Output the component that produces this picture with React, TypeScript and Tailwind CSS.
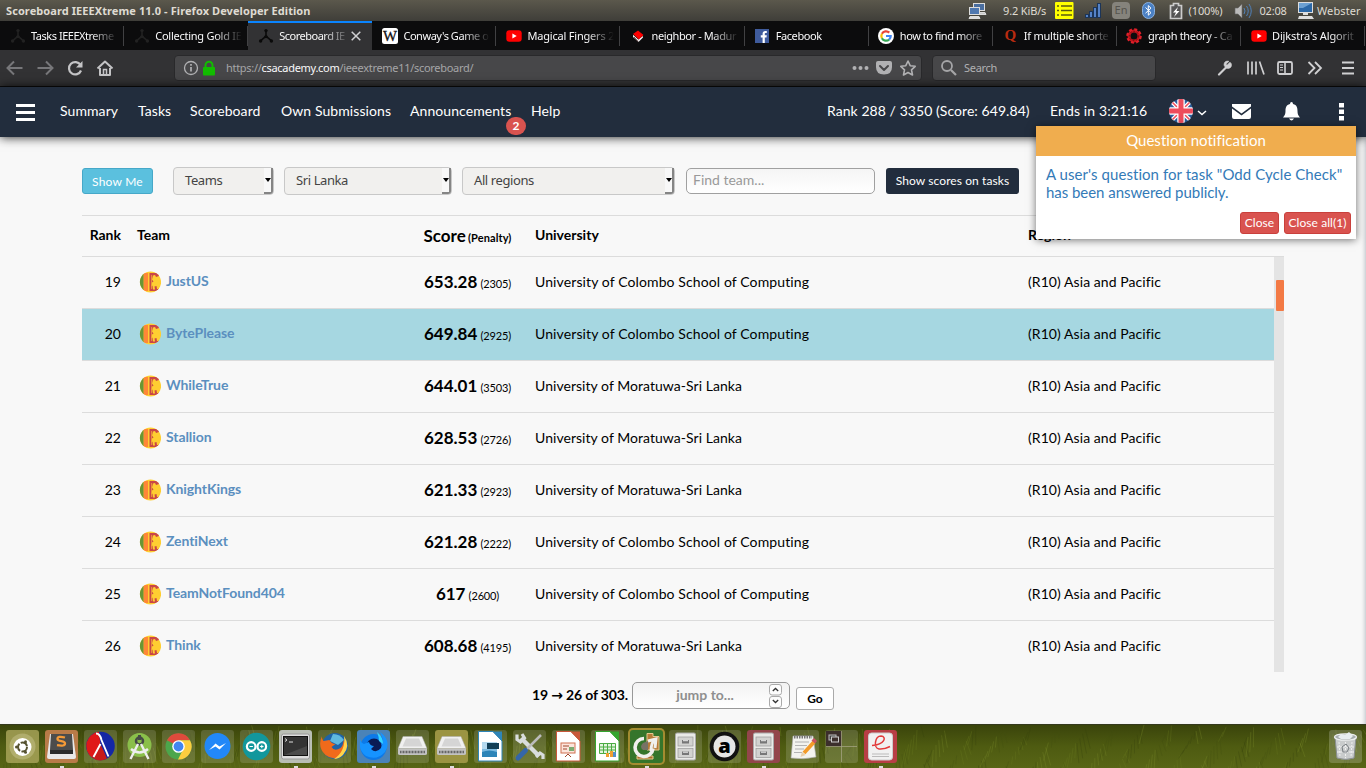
import React from "react";

const ui = "font-['Noto_Sans',sans-serif]";

function CsIcon({ dim }: { dim?: boolean }) {
  return (
    <svg width="16" height="16" viewBox="0 0 16 16" className="shrink-0" stroke={dim ? "#222" : "#0a0a0a"} fill={dim ? "#222" : "#0a0a0a"}>
      <path d="M8 3.2V8.2L2.5 12.8M8 8.2l5.5 4.6" strokeWidth="1.6" fill="none" />
      <circle cx="8" cy="2.6" r="1.7" stroke="none" />
      <circle cx="2.6" cy="13" r="1.7" stroke="none" />
      <circle cx="13.4" cy="13" r="1.7" stroke="none" />
      <circle cx="8" cy="8.6" r="1.7" stroke="none" />
    </svg>
  );
}

function YoutubeIcon() {
  return (
    <svg width="16" height="16" viewBox="0 0 16 16" className="shrink-0">
      <rect x="0.3" y="2.3" width="15.4" height="11.4" rx="3" fill="#f00" />
      <path d="M6.4 5.5v5l4.3-2.5z" fill="#fff" />
    </svg>
  );
}

const tabs: { title: string; icon: React.ReactNode; active?: boolean; ls: string }[] = [
  { title: "Tasks IEEEXtreme", icon: <CsIcon dim />, ls: "tracking-[-0.48px]" },
  { title: "Collecting Gold IE", icon: <CsIcon dim />, ls: "tracking-[-0.25px]" },
  { title: "Scoreboard IE", icon: <CsIcon />, active: true, ls: "tracking-[-0.5px]" },
  {
    title: "Conway's Game o",
    icon: (
      <svg width="16" height="16" viewBox="0 0 16 16" className="shrink-0">
        <rect width="16" height="16" rx="2.5" fill="#fff" />
        <text x="8" y="12.800" textAnchor="middle" fontFamily="Liberation Serif" fontSize="14" fill="#111" stroke="#111" strokeWidth=".3" textLength="14" lengthAdjust="spacingAndGlyphs">W</text>
      </svg>
    ),
    ls: "tracking-[-0.45px]",
  },
  { title: "Magical Fingers 2", icon: <YoutubeIcon />, ls: "tracking-[-0.2px]" },
  {
    title: "neighbor - Madur",
    icon: (
      <svg width="16" height="16" viewBox="0 0 16 16" className="shrink-0">
        <path d="M3 6.5V9l5.5 5L13 9.5V8L8.7 11z" fill="#eee" />
        <path d="M3 6l5-3.5L13.5 7 8.7 11.4z" fill="#f00" />
        <path d="M3 6.3l5.5 5M4 9l4 4.5" stroke="#300" strokeWidth=".7" />
      </svg>
    ),
    ls: "tracking-[-0.4px]",
  },
  {
    title: "Facebook",
    icon: (
      <svg width="16" height="16" viewBox="0 0 16 16" className="shrink-0">
        <rect x="1" y="1" width="14" height="14" fill="#3f5b9c" />
        <path d="M8.6 15V9.5H6.8V7.3h1.8V5.8c0-2 1.1-2.9 2.7-2.9h1.5v2.2h-1c-.8 0-1 .4-1 1v1.2h2l-.3 2.2h-1.7V15z" fill="#fff" />
      </svg>
    ),
    ls: "tracking-[-0.4px]",
  },
  {
    title: "how to find more",
    icon: (
      <svg width="16" height="16" viewBox="0 0 16 16" className="shrink-0">
        <circle cx="8" cy="8" r="8" fill="#fff" />
        <g fill="none" strokeWidth="2.2">
          <path d="M11.3 4.6A4.7 4.7 0 0 0 3.9 5.8" stroke="#ea4335" />
          <path d="M3.9 5.8a4.8 4.8 0 0 0 0 4.4" stroke="#fbbc05" />
          <path d="M3.9 10.2a4.7 4.7 0 0 0 7.2 1.4" stroke="#34a853" />
          <path d="M11.1 11.6A4.6 4.6 0 0 0 12.7 8H8" stroke="#4285f4" />
        </g>
      </svg>
    ),
    ls: "tracking-[-0.42px]",
  },
  {
    title: "If multiple shorte",
    icon: (
      <span className="w-4 h-4 shrink-0 text-center leading-[15px] font-bold text-[15px] text-[#b92b10] font-['Liberation_Serif',serif]">Q</span>
    ),
    ls: "tracking-[-0.25px]",
  },
  {
    title: "graph theory - Ca",
    icon: (
      <svg width="16" height="16" viewBox="0 0 16 16" className="shrink-0">
        <circle cx="8" cy="8" r="5" fill="none" stroke="#c8141c" strokeWidth="3" />
        <circle cx="8" cy="8" r="6.7" fill="none" stroke="#e0202a" strokeWidth="2.2" strokeDasharray="3 2.26" />
        <circle cx="8" cy="8" r="4.7" fill="none" stroke="#5c0a0a" strokeWidth=".9" strokeDasharray="1.5 2" />
      </svg>
    ),
    ls: "tracking-[-0.32px]",
  },
  { title: "Dijkstra's Algorit", icon: <YoutubeIcon />, ls: "tracking-[-0.15px]" },
];

function TitleBar() {
  return (
    <div className={`h-[21px] flex items-center bg-gradient-to-b from-[#5b584c] to-[#3f3e39] text-[#dfdbd2] text-[11px] whitespace-nowrap ${ui}`}>
      <div className="w-[967px] pl-1.5 pt-px font-bold text-[11px] tracking-[0.08px]">Scoreboard IEEEXtreme 11.0 - Firefox Developer Edition</div>
      <svg width="22" height="19" viewBox="0 0 22 19" className="shrink-0">
        <g stroke="#ddd" strokeWidth="1">
          <rect x="6.5" y="2.5" width="11" height="7" fill="#4a6ea0" />
          <path d="M9 11.5h9l1 2h-10z" fill="#ccc" />
          <rect x="2.5" y="6.5" width="10" height="7" fill="#4f78b0" />
          <path d="M3 15.5h9l1 2H2z" fill="#ddd" />
        </g>
      </svg>
      <div className="w-[66px] pl-3.5 pt-px text-[11px] tracking-[-0.15px]">9.2 KiB/s</div>
      <svg width="19" height="17" viewBox="0 0 19 17" className="shrink-0">
        <rect width="18.5" height="17" rx="1" fill="#ff0" />
        <path d="M2 4h2M2 8.500h2M2 13h2M6 4h11M6 8.500h11M6 13h11" stroke="#5a5a10" strokeWidth="1.4" />
      </svg>
      <svg width="16" height="15" viewBox="0 0 16 15" className="shrink-0 ml-[11px]">
        <g fill="#5583c8" stroke="#1c3558">
          <rect x=".5" y="11.500" width="3" height="3" />
          <rect x="4.500" y="8.500" width="3" height="6" />
          <rect x="8.500" y="4.500" width="3" height="10" />
          <rect x="12.500" y=".5" width="3" height="14" />
        </g>
      </svg>
      <div className="ml-[11px] w-[18px] h-[17px] shrink-0 rounded-sm bg-[#85837c] text-[#55534d] text-center leading-[16px] text-[11px]">En</div>
      <svg width="13" height="17" viewBox="0 0 13 17" className="shrink-0 ml-3">
        <rect x=".5" y=".5" width="12" height="16" rx="6" fill="#4a80c4" stroke="#8ab0de" />
        <path d="M3.500 5.500l5.500 5.200-2.700 2.500V3.600L9 6.200 3.500 11.200" stroke="#fff" fill="none" />
      </svg>
      <svg width="14" height="19" viewBox="0 0 14 19" className="shrink-0 ml-3.5">
        <path d="M4.500 2.500h5v2h3v13h-11v-13h3z" fill="#555" stroke="#ccc" strokeWidth="1.700" />
        <path d="M9 6l-5 5.500h3L5 16l5.500-6H7.500z" fill="#fff" />
      </svg>
      <div className="ml-[5.500px] w-[45px] pt-px text-[11px] tracking-[-0.1px]">(100%)</div>
      <svg width="19" height="18" viewBox="0 0 19 18" className="shrink-0">
        <path d="M1 6h3l4-4v14l-4-4H1z" fill="#bbb" stroke="#666" strokeWidth=".6" />
        <path d="M10 6q2 3 0 6M12.500 4q3.500 5 0 10M15 2q4.500 7 0 14" stroke="#5080b8" fill="none" />
      </svg>
      <div className="ml-[7px] w-[37px] pt-px text-[11px] tracking-[-0.2px]">02:08</div>
      <svg width="18" height="19" viewBox="0 0 18 19" className="shrink-0">
        <rect x="1.500" y="1.500" width="14" height="10" fill="#2b68a8" stroke="#ddd" />
        <path d="M2 2h13l-9 5H2z" fill="#6ca0d2" />
        <path d="M6 12h5v2H6zM2 15h13l2 3H1z" fill="#ddd" />
      </svg>
      <div className="ml-[2.500px] pt-px text-[11px] tracking-[0.1px]">Webster</div>
    </div>
  );
}

function TabStrip() {
  return (
    <div className={`h-[29px] flex bg-[#0c0c0d] overflow-hidden ${ui}`}>
      {tabs.map((t) => (
        <div
          key={t.title}
          className={`relative w-[124.1px] shrink-0 flex items-center pl-[9.600px] ${t.active ? "bg-[#323234] border-t-2 border-[#0a84ff] pb-0.5" : ""}`}
        >
          {t.icon}
          <div className={`ml-[5.500px] shrink-0 whitespace-nowrap text-[11px] text-[#f9f9fa] leading-4 ${t.ls} ${t.active ? "w-[72px] [mask-image:linear-gradient(to_right,#000_60%,transparent_100%)]" : "w-[87px] [mask-image:linear-gradient(to_right,#000_68%,transparent_100%)]"}`}>
            {t.title}
          </div>
          {t.active ? (
            <svg width="10" height="10" viewBox="0 0 10 10" className="shrink-0">
              <path d="M.7.7l8.600 8.600M9.300.7L.7 9.300" stroke="#d0d0d2" strokeWidth="1.500" />
            </svg>
          ) : (
            <div className="absolute right-0 top-[5px] h-[20px] w-px bg-[#414143]" />
          )}
        </div>
      ))}
    </div>
  );
}

function Toolbar() {
  return (
    <div className={`h-[37px] flex items-center bg-[#323234] border-b border-[#0c0c0d] text-[11px] ${ui}`}>
      <svg width="120" height="36" viewBox="0 0 120 36" fill="none" strokeWidth="2" className="shrink-0">
        <path d="M22.500 18H8M14 11.500L7.500 18l6.500 6.500" stroke="#77777a" />
        <path d="M37.500 18H52M46 11.500l6.500 6.500-6.500 6.500" stroke="#77777a" />
        <path d="M80.500 15a6.200 6.200 0 1 0 .5 5.500" stroke="#c4c4c6" strokeWidth="2.200" />
        <path d="M82.500 11v6.500H76z" fill="#c4c4c6" />
        <path d="M97.500 18.500L105 11.500l7.500 7M100 18v7h10v-7" stroke="#c4c4c6" strokeLinejoin="round" />
        <path d="M103.500 25v-5.500h3V25" stroke="#c4c4c6" strokeWidth="1.500" />
      </svg>
      <div className="ml-[54px] w-[748px] h-[26px] rounded-[4px] bg-[#474749] border border-[#29292b] flex items-center">
        <svg width="42" height="24" viewBox="0 0 42 24" className="shrink-0">
          <circle cx="16" cy="12" r="6.500" fill="none" stroke="#b1b1b3" strokeWidth="1.300" />
          <path d="M16 11v4.500M16 8v1.700" stroke="#b1b1b3" strokeWidth="1.700" />
          <rect x="28" y="11" width="12" height="8.500" rx="1" fill="#12bc00" />
          <path d="M30.500 12V9.300a3.500 3.500 0 0 1 7 0V12" stroke="#12bc00" strokeWidth="2" fill="none" />
        </svg>
        <div className="ml-[9px] w-[626px] text-[#a5a5a7] tracking-[-0.3px] whitespace-nowrap">
          https://<span className="text-[#f9f9fa]">csacademy.com</span>/ieeextreme11/scoreboard/
        </div>
        <svg width="70" height="24" viewBox="0 0 70 24" fill="#b1b1b3" className="shrink-0">
          <circle cx="3.500" cy="12" r="2" />
          <circle cx="9.500" cy="12" r="2" />
          <circle cx="15.500" cy="12" r="2" />
          <path d="M27 5h12q2 0 2 2v4q0 7.500-8 7.500T25 11V7q0-2 2-2z" />
          <path d="M29 10l4 4 4-4" stroke="#474749" strokeWidth="2" fill="none" strokeLinecap="round" strokeLinejoin="round" />
          <path d="M57 5l2.200 4.700 5 .6-3.700 3.500 1 5.200-4.500-2.500-4.500 2.500 1-5.200-3.700-3.500 5-.6z" fill="none" stroke="#b1b1b3" strokeWidth="1.600" strokeLinejoin="round" />
        </svg>
      </div>
      <div className="ml-2.5 w-[224px] h-[26px] rounded-[4px] bg-[#474749] border border-[#29292b] flex items-center text-[#b1b1b3]">
        <svg width="30" height="24" viewBox="0 0 30 24" className="shrink-0" fill="none" stroke="#a5a5a7" strokeWidth="1.800">
          <circle cx="14" cy="10" r="5" />
          <path d="M18 14l5 5" strokeWidth="2.200" />
        </svg>
        <span className="ml-px tracking-[-0.3px]">Search</span>
      </div>
      <svg width="210" height="36" viewBox="0 0 210 36" className="shrink-0" stroke="#d0d0d2" fill="none" strokeWidth="1.800">
        <path d="M63 24.500l7-7" strokeWidth="2.200" strokeLinecap="round" />
        <path d="M74 12.200l-2.800 2.800-.9-.1-.1-.9L73 11.300q-4.200-1-5 2.900l.3 1.700 2.300 2.300 1.700.3q4-.9 3-4.800z" fill="#d0d0d2" strokeWidth=".6" />
        <path d="M92 11.500v13M96 11.500v13M100 11.500v13M103.500 11.500l4.500 13" strokeWidth="1.700" />
        <rect x="122" y="12" width="14" height="12" rx="1.500" />
        <path d="M129 12v12" strokeWidth="1.600" /><path d="M124 15h3M124 17.500h3M124 20h3" strokeWidth="1" />
        <path d="M152.500 12l6 6-6 6M159 12l6 6-6 6" />
        <path d="M186 12.500h12M186 18h12M186 23.500h12" strokeWidth="2" />
      </svg>
    </div>
  );
}

function UkFlag() {
  return (
    <svg width="24" height="24" viewBox="0 0 24 24" className="shrink-0 -mt-0.5">
      <clipPath id="uk"><circle cx="12" cy="12" r="12" /></clipPath>
      <g clipPath="url(#uk)">
        <rect width="24" height="24" fill="#2a5f9e" />
        <path d="M0 0l24 24M24 0L0 24" stroke="#fff" strokeWidth="4" />
        <path d="M0 0l24 24M24 0L0 24" stroke="#ed4c5c" strokeWidth="1.500" />
        <path d="M12 0v24M0 12h24" stroke="#fff" strokeWidth="7.500" />
        <path d="M12 0v24M0 12h24" stroke="#ed4c5c" strokeWidth="5" />
      </g>
    </svg>
  );
}

function Notification() {
  return (
    <div className="absolute right-[10px] top-[39px] w-[320px] h-[113px] bg-white shadow-[0_1px_8px_rgba(0,0,0,0.55)] z-20">
      <div className="h-[30px] bg-[#f0ad4e] text-white text-center text-[15px] leading-[28px] tracking-[0.02px]">Question notification</div>
      <div className="px-2.5 pt-[9px] text-[15px] leading-[18px] text-[#337ab7] whitespace-nowrap">
        <div className="tracking-[0.06px]">A user's question for task "Odd Cycle Check"</div>
        <div className="tracking-[-0.04px]">has been answered publicly.</div>
      </div>
      <div className="flex justify-end gap-[5px] pr-[5px] pt-[11px] text-[12px] leading-5 text-white">
        <div className="w-[39px] h-[22px] rounded-[3px] bg-[#d9534f] border border-[#c9403c] text-center">Close</div>
        <div className="w-[67px] h-[22px] rounded-[3px] bg-[#d9534f] border border-[#c9403c] text-center">Close all(1)</div>
      </div>
    </div>
  );
}

function NavBar() {
  return (
    <div className="relative z-10 h-[50px] bg-[#222d3d] shadow-[0_0_10px_rgba(0,0,0,0.9)] flex items-center text-white text-[14px] whitespace-nowrap tracking-[0.08px]">
      <div className="ml-4 w-[44px] flex flex-col gap-[3px]">
        <div className="w-[19px] h-[3px] bg-white" />
        <div className="w-[19px] h-[3px] bg-white mt-px" />
        <div className="w-[19px] h-[3px] bg-white mt-px" />
      </div>
      <div className="flex items-center pb-1">
        <div className="w-[78px]">Summary</div>
        <div className="w-[52px]">Tasks</div>
        <div className="w-[91px]">Scoreboard</div>
        <div className="w-[129px]">Own Submissions</div>
        <div className="relative w-[121px]">
          Announcements
          <span className="absolute left-[96px] top-[17px] w-[20px] h-[18px] rounded-full bg-[#d9534f] text-center text-[12px] font-bold leading-[17px]">2</span>
        </div>
        <div className="w-[296px]">Help</div>
        <div className="w-[223px] tracking-[0.06px]">Rank 288 / 3350 (Score: 649.84)</div>
        <div className="w-[119px] tracking-[0.12px]">Ends in 3:21:16</div>
      </div>
      <UkFlag />
      <svg width="173" height="30" viewBox="0 0 173 30" className="shrink-0 -mt-0.5">
        <path d="M5 15l4 3.500 4-3.500" stroke="#fff" strokeWidth="1.500" fill="none" />
        <path d="M39 8h19v2.500l-9.500 7-9.500-7z" fill="#fff" />
        <path d="M39 12.500l9.500 7 9.500-7V21q0 2-2 2H41q-2 0-2-2z" fill="#fff" />
        <path d="M98.500 6q1.500 0 1.500 2c4 1 4.500 4 4.500 7 0 4 1.500 5 2.500 6.500H90c1-1.500 2.500-2.500 2.500-6.500 0-3 .5-6 4.500-7q0-2 1.500-2zM96 22.500h5q-2.500 4-5 0z" fill="#fff" />
        <path d="M146 7h5v4.500h-5zM146 13.500h5V18h-5zM146 20h5v4.500h-5z" fill="#fff" />
      </svg>
      <Notification />
    </div>
  );
}

function LankaFlag() {
  return (
    <svg width="22" height="22" viewBox="0 0 22 22" className="shrink-0 mt-0.5">
      <clipPath id="lk"><circle cx="11.500" cy="11" r="10.600" /></clipPath>
      <g clipPath="url(#lk)">
        <rect width="22" height="22" fill="#ffce31" />
        <rect y="2" width="4.700" height="18" fill="#699635" />
        <rect x="4.700" y="2" width="4.300" height="18" fill="#ff8736" />
        <rect x="10.500" y="2" width="9.500" height="18" fill="#c94747" />
        <path d="M14 4.500l2-.5 1 2 3-1v13h-2l-.5-3-2 .5.5 3h-2l-.5-4-1 1 .5-4 1.500-1-1.500-2z" fill="#ffce31" />
        <path d="M12.600 4v14" stroke="#ffce31" strokeWidth=".6" />
      </g>
    </svg>
  );
}

function Select({ label, width }: { label: string; width: string }) {
  return (
    <div className={`${width} h-7 shrink-0 rounded-[4px] border border-[#c8c8c8] bg-[#f1f0ee] flex items-center justify-between text-[#444]`}>
      <span className="pl-[11px] pb-px text-[13px] tracking-[-0.4px] font-['Noto_Sans',sans-serif]">{label}</span>
      <span className="w-[9px] h-[26px] bg-[#f8f8f8] border-r-2 border-b-2 border-[#858585] rounded-br-[3px] flex items-center justify-center">
        <svg width="6" height="4" viewBox="0 0 6 4" className="shrink-0"><path d="M0 0h6L3 4z" fill="#000" /></svg>
      </span>
    </div>
  );
}

const rows = [
  { rank: 19, team: "JustUS", score: "653.28", pen: "2305", uni: "University of Colombo School of Computing" },
  { rank: 20, team: "BytePlease", score: "649.84", pen: "2925", uni: "University of Colombo School of Computing", own: true },
  { rank: 21, team: "WhileTrue", score: "644.01", pen: "3503", uni: "University of Moratuwa-Sri Lanka" },
  { rank: 22, team: "Stallion", score: "628.53", pen: "2726", uni: "University of Moratuwa-Sri Lanka" },
  { rank: 23, team: "KnightKings", score: "621.33", pen: "2923", uni: "University of Moratuwa-Sri Lanka" },
  { rank: 24, team: "ZentiNext", score: "621.28", pen: "2222", uni: "University of Colombo School of Computing" },
  { rank: 25, team: "TeamNotFound404", score: "617", pen: "2600", uni: "University of Colombo School of Computing" },
  { rank: 26, team: "Think", score: "608.68", pen: "4195", uni: "University of Moratuwa-Sri Lanka" },
];

function Scoreboard() {
  return (
    <div className="mx-[82px] mt-5 text-[14px] text-black">
      <div className="h-[42px] border-y border-[#dcdcdc] flex items-center font-bold">
        <div className="w-[39px] text-right pb-1">Rank</div>
        <div className="ml-4 w-[272px] pb-1">Team</div>
        <div className="w-[117px] text-center text-[17px] whitespace-nowrap">Score <span className="text-[11px] -ml-0.5 tracking-[0.1px]">(Penalty)</span></div>
        <div className="ml-[9px] w-[493px] pb-1">University</div>
        <div className="pb-1">Region</div>
      </div>
      <div className="flex h-[415px] overflow-hidden">
        <div className="w-[1192px]">
          {rows.map((r) => (
            <div key={r.rank} className={`h-[52px] flex items-center pb-0.5 border-b border-[#dcdcdc] ${r.own ? "bg-[#a6d7e1]" : ""}`}>
              <div className="w-[39px] text-right">{r.rank}</div>
              <div className="ml-[18px] w-[270px] flex items-center gap-[5px] pb-0.5 font-bold text-[#5b8fbf] tracking-[-0.08px]">
                <LankaFlag />
                <span>{r.team}</span>
              </div>
              <div className="w-[117px] text-center font-bold text-[17px] whitespace-nowrap">
                {r.score} <span className="font-normal text-[11px] -ml-px tracking-[-0.15px]">({r.pen})</span>
              </div>
              <div className={`ml-[9px] w-[493px] ${r.uni.includes("Moratuwa") ? "tracking-[0.04px]" : "tracking-[0.11px]"}`}>{r.uni}</div>
              <div className="tracking-[0.07px]">(R10) Asia and Pacific</div>
            </div>
          ))}
        </div>
        <div className="w-[10px] h-[415px] bg-[#e4e4e4] pl-0.5 pt-[23px]">
          <div className="h-[31px] bg-[#f37a45] rounded-[1px]" />
        </div>
      </div>
    </div>
  );
}

function Page() {
  return (
    <div className="h-[587px] bg-[#f8f8f8] overflow-hidden shadow-[inset_-4px_0_4px_-3px_rgba(70,80,100,0.35)]">
      <div className="pt-[30px] pl-[82px] flex items-center">
        <div className="w-[71px] h-[26px] rounded-[3px] bg-[#5bc0de] border border-[#46a8c8] text-white text-[12px] leading-[26px] text-center tracking-[0.2px]">Show Me</div>
        <div className="ml-5"><Select label="Teams" width="w-[101px]" /></div>
        <div className="ml-2.5"><Select label="Sri Lanka" width="w-[168px]" /></div>
        <div className="ml-2.5"><Select label="All regions" width="w-[213px]" /></div>
        <div className="ml-[11px] w-[189px] h-[26px] rounded-[5px] border border-[#a0a0a0] bg-gradient-to-b from-[#f5f5f5] to-white pl-1.5 text-[14px] leading-[22px] text-[#999] tracking-[0px]">Find team...</div>
        <div className="ml-[11px] w-[133px] h-[26px] rounded-[3px] bg-[#222d3d] text-white text-[12px] leading-[25px] text-center tracking-[0.08px]">Show scores on tasks</div>
      </div>
      <Scoreboard />
      <div className="flex pt-[10px] pl-[532px] text-[14px] font-bold">
        <div className="w-[100px] leading-[26px] whitespace-nowrap tracking-[-0.15px]">19 <span className="font-['DejaVu_Sans',sans-serif] text-[14px] leading-none">→</span> 26 of 303.</div>
        <div className="w-[158px] h-[27px] rounded-[5px] border border-[#999] bg-gradient-to-b from-[#f3f3f3] to-white flex items-center text-[#8f8f8f]">
          <div className="w-[136px] pl-2 pb-0.5 text-center">jump to...</div>
          <svg width="13" height="25" viewBox="0 0 13 25" className="shrink-0" fill="#fdfdfd" stroke="#aaa">
            <rect x=".5" y="1.500" width="12" height="10.500" rx="2.500" />
            <rect x=".5" y="13.500" width="12" height="11" rx="2.500" />
            <path d="M3.800 8l2.700-2.500L9.200 8M3.800 17l2.700 2.500L9.200 17" stroke="#333" strokeWidth="1.300" fill="none" />
          </svg>
        </div>
        <div className="ml-1.5 mt-[5px] w-[38px] h-[23px] rounded-[3px] bg-white border border-[#aaa] text-center text-[12px] leading-[21px]">Go</div>
      </div>
    </div>
  );
}

function Drive() {
  return (
    <g>
      <path d="M7 6.500h19l5 12H2z" fill="#f0f0f0" stroke="#aaa" strokeWidth=".5" />
      <path d="M10 8.500h13l3.500 8h-20z" fill="#d5d5d5" />
      <path d="M2 18.500h29v5q0 1.500-2 1.500H4q-2 0-2-1.500z" fill="#c2c2c2" />
      <path d="M4 22h25" stroke="#666" strokeWidth="2.500" strokeDasharray="1 .5" />
    </g>
  );
}
function Cabinet() {
  return (
    <g>
      <rect x="6.500" y="3" width="20" height="27" rx="1.500" fill="#e9e9e7" stroke="#aaa" />
      <rect x="9" y="7" width="15" height="9" fill="#d2d2d0" stroke="#999" strokeWidth=".7" />
      <rect x="9" y="18.500" width="15" height="9" fill="#d2d2d0" stroke="#999" strokeWidth=".7" />
      <rect x="13" y="10" width="7" height="3.500" fill="#777" /><rect x="13" y="21.500" width="7" height="3.500" fill="#777" />
      <path d="M14 10.700h5M14 22.200h5" stroke="#eee" />
    </g>
  );
}
function Doc({ c, children }: { c: string; children: React.ReactNode }) {
  return (
    <g>
      <path d="M4.500 1.500H19l9 9.500v20H4.500z" fill="#fff" stroke={c} />
      <path d="M18.500 1.500H28V11z" fill={c} />
      {children}
    </g>
  );
}

const dock: { bg: string; art: React.ReactNode; mark?: boolean }[] = [
  { bg: "bg-[#aca85c]/80", art: <g><circle cx="16.500" cy="16.500" r="13" fill="#cbc893" opacity=".45" /><circle cx="16.500" cy="17" r="9" fill="#fff" /><circle cx="16.500" cy="17" r="4.500" fill="none" stroke="#555230" strokeWidth="2" strokeDasharray="8 1.400" /><circle cx="10.500" cy="17" r="1.500" fill="#555230" /><circle cx="19.500" cy="11.800" r="1.500" fill="#555230" /><circle cx="19.500" cy="22.200" r="1.500" fill="#555230" /></g> },
  { bg: "bg-[#b97b48]", mark: true, art: <g><path d="M5 4h23l3 23q0 2-2 2H4q-2 0-2-2z" fill="#e8e8e8" /><path d="M6 4h21l1 16H5z" fill="#4c4c4c" /><path d="M5 20h23v4H5z" fill="#2b2b2b" /><path d="M20 7.500q-7.500-2-7.500 1.500c0 3 7.500 1.400 7.500 4.400q0 3.300-8 1.800" fill="none" stroke="#f59a37" strokeWidth="2.300" /></g> },
  { bg: "bg-white/15", art: <g><circle cx="16.500" cy="16" r="14.300" fill="#1427a5" /><path d="M16.500 16L15 1.800A14.300 14.300 0 0 0 8 27.500z" fill="#e01818" /><path d="M8 27.500A14 14 0 0 0 23 28.500L17 15z" fill="#c71a1a" /><path d="M12 3.500q4 0 5.500 6.500l7 16.500M16.500 14L9.500 27" fill="none" stroke="#fff" strokeWidth="1.900" /></g> },
  { bg: "bg-white/15", art: <g><circle cx="16.500" cy="15" r="12" fill="#8abf4a" /><circle cx="16.500" cy="11" r="3.500" fill="none" stroke="#454a45" strokeWidth="2.500" /><path d="M15 14L7.500 29M18 14l7.500 15" stroke="#eee" strokeWidth="2.400" /><path d="M8 19q8.500 7 17 0" stroke="#eee" fill="none" strokeWidth="2.400" /><path d="M16.500 5v5" stroke="#454a45" strokeWidth="3" /></g> },
  { bg: "bg-white/15", art: <g><circle cx="16.500" cy="16.500" r="13" fill="#4ca64b" /><path d="M16.500 16.500L5 10.300A13 13 0 0 1 28 10.300H16.500z" fill="#df4a3c" /><path d="M28 10.300A13 13 0 0 1 16 29.500l6-12-5.500-7.200z" fill="#fccd3f" /><circle cx="16.500" cy="16.500" r="6.300" fill="#fff" /><circle cx="16.500" cy="16.500" r="4.900" fill="#4286f0" /></g> },
  { bg: "bg-white/15", art: <g><circle cx="16.500" cy="16" r="13" fill="#2288f8" /><path d="M8 20l6.500-6.500 4 3 6.500-3.500-6.500 6.500-4-3z" fill="#fff" /></g> },
  { bg: "bg-white/15", art: <g><circle cx="16.500" cy="16.500" r="13.800" fill="#12979c" /><g fill="none" stroke="#fff" strokeWidth="2.200"><circle cx="11.200" cy="16.500" r="4.300" /><circle cx="21.800" cy="16.500" r="4.300" /></g><path d="M9.500 16.500h3.400M20.100 16.500h3.400M21.800 14.800v3.400" stroke="#fff" /></g> },
  { bg: "bg-[#b9beb5]", mark: true, art: <g><rect x="2.500" y="4" width="28" height="25" rx="2" fill="#ddd" stroke="#999" /><rect x="4.500" y="6.500" width="24" height="19" fill="#343434" stroke="#111" /><path d="M6 8.500l2 1.500-2 1.500M10 12h4" stroke="#ddd" fill="none" /><path d="M5 25l23-9v9z" fill="#4b4b4b" /></g> },
  { bg: "bg-white/15", art: <g><circle cx="17" cy="16" r="13" fill="#1f63a7" /><path d="M15 4q7 0 11 6l-6 5-8-4z" fill="#60b9df" /><path d="M4 6q-.5 3 1.500 5l6-1q2 4 6 4l-4 3q3 5 9 1 3-3 3-8 4 8-1 14-8 8-17 1Q-1 17 4 6z" fill="#f06a1b" /><path d="M26 6q7 10-1 19-4 4-9 4 12-8 10-23z" fill="#ffd34b" /></g> },
  { bg: "bg-[#4a83b8]", mark: true, art: <g><circle cx="16.500" cy="17" r="13" fill="#0c79e8" /><circle cx="17" cy="16" r="7.500" fill="#0a1b55" /><path d="M4 8q-1 5 3 6l5-2q1 4 5 4l-3 3q5 5 10-1 4-7-1-16 12 9 5 20-8 9-19 4Q0 19 4 8z" fill="#1693ff" /><path d="M20 2q2 5 2 9l4 3q0-7-6-12z" fill="#35d5ff" /></g> },
  { bg: "bg-white/15", art: <Drive /> },
  { bg: "bg-[#9b9442]", mark: true, art: <Drive /> },
  { bg: "bg-white/15", art: <Doc c="#2e85b8"><rect x="8" y="12" width="15" height="15" fill="#b4d9ef" /><rect x="13" y="13" width="12" height="6" fill="#123f57" /><path d="M8 19h15v3H8z" fill="#7dbbe0" /><path d="M8 22q7-3 15 0v5H8z" fill="#2e85b8" /></Doc> },
  { bg: "bg-white/15", art: <g><path d="M8 8l18 18" stroke="#d9dddd" strokeWidth="4.500" /><path d="M4 4.500v5l3.500 2.500 4-4L9 4M23 27l4-4 3 2v4" fill="none" stroke="#d9dddd" strokeWidth="3.200" /><path d="M28 5L14 19" stroke="#bbb" strokeWidth="2.500" /><path d="M12.500 20.500l-7.500 7.500" stroke="#3466a8" strokeWidth="5" strokeLinecap="round" /></g> },
  { bg: "bg-white/15", art: <Doc c="#c9583a"><rect x="9" y="13" width="14" height="10" fill="#fce5dc" stroke="#d07150" /><path d="M11 16h6M11 19h4M13 27l3-3 3 3" stroke="#a0482c" fill="none" /><rect x="17" y="17" width="5" height="4" fill="#7cab70" /></Doc> },
  { bg: "bg-white/15", art: <Doc c="#35a52f"><path d="M8.500 13.500h16v10h-16zM8.500 17h16M8.500 20h16M12.500 13.500v10M16.500 13.500v10M20.500 13.500v10" fill="#e4f5df" stroke="#4bac43" /><path d="M15 27v-4h3v4zM19 27v-6h3v6z" fill="#f0a030" /><path d="M22 27v-5h3v5z" fill="#5290c8" /></Doc> },
  { bg: "bg-[#35752b] ring-2 ring-[#a38c31]", mark: true, art: <g><path d="M17 3.500h6v3h6V20H17z" fill="#b57b36" stroke="#e7c88e" /><path d="M7 26h16v3H7z" fill="#a76d2b" stroke="#e7c88e" /><path d="M14 8.500a9 9 0 1 0 9 10" fill="none" stroke="#f0f0ed" strokeWidth="3.600" /><path d="M18 11l8-2-1 9M25 9q-4 4-4 12" fill="none" stroke="#f0f0ed" strokeWidth="3" /><path d="M13 13q-4 4 0 7h5V11z" fill="#777265" /></g> },
  { bg: "bg-white/15", art: <Cabinet /> },
  { bg: "bg-white/15", art: <g><circle cx="16.500" cy="16.500" r="14.800" fill="#111" /><circle cx="16.500" cy="16.500" r="11" fill="#e5e5e5" /><text x="16.500" y="22.500" textAnchor="middle" fontFamily="Open Sans" fontWeight="800" fontSize="20" fill="#000">a</text></g> },
  { bg: "bg-[#93454b]", mark: true, art: <Cabinet /> },
  { bg: "bg-white/15", art: <g><path d="M7 6h20l3 21q-12 3-25 1z" fill="#f3f3ef" stroke="#aaa" strokeWidth=".6" /><path d="M8 7h18" stroke="#777" strokeWidth="3" strokeDasharray="1.500 1" /><path d="M9 12h14M9 15.500h12M9 19h9M8 22.500h8" stroke="#aaa" strokeWidth=".9" /><path d="M28 12L18 23" stroke="#f39b29" strokeWidth="3.800" /><path d="M28 8l3 3-2 2.500-3.500-3z" fill="#c75462" /><path d="M16 22l3.500 3-5 2z" fill="#e8cea8" /></g> },
  { bg: "bg-white/15", art: <g><rect x="1" y="1" width="15.500" height="15.500" fill="#3c2f2c" /><path d="M16.500 1v31M1 16.500h31" stroke="#aaa88a" strokeWidth=".7" /><rect x="4" y="5" width="7" height="5" fill="#444" stroke="#bbb" /><rect x="6.500" y="7" width="7" height="5" fill="#3c2f2c" stroke="#ccc" /></g> },
  { bg: "bg-[#b83e45]", mark: true, art: <g><rect x="4.500" y="3" width="24" height="27" rx="3" fill="#f1f1f1" stroke="#ccc" /><path d="M8 15.500c13-1 15-9 9-9.500-6 0-8 12-2 13 4 .5 8-1 11-2.500" stroke="#e33a3a" fill="none" strokeWidth="1.500" /><path d="M8 24h17M8 26.500h17" stroke="#bbb" /></g> },
];

const blades = Array.from({ length: 520 }, (_, i) => {
  const x = (i * 617.3) % 1366;
  const y = (i * 37.7) % 44;
  const lean = ((i * 13) % 11) - 5;
  return { d: `M${x.toFixed(1)} ${y.toFixed(1)}l${lean} ${8 + (i % 13)}`, c: ["#7b8b2b", "#35400c", "#697a1f", "#414e10"][i % 4] };
});

function Dock() {
  return (
    <div className="relative h-11 border-t border-[#34391d] bg-gradient-to-b from-[#3a440b] via-[#4e5b11] to-[#586516] overflow-hidden">
      <svg width="1366" height="43" viewBox="0 0 1366 43" className="absolute inset-0">
        {blades.map((b, i) => (
          <path key={i} d={b.d} stroke={b.c} strokeWidth=".8" opacity=".4" />
        ))}
      </svg>
      <div className="relative flex pt-[5px] pl-1.5 gap-1.5">
        {dock.map((d, i) => (
          <div key={i} className="w-[33px] shrink-0">
            <div className={`w-[33px] h-[33px] rounded-[3px] ${d.bg}`}>
              <svg width="33" height="33" viewBox="0 0 33 33">{d.art}</svg>
            </div>
            {d.mark && <div className="mx-auto mt-[3px] w-1 h-0.5 bg-[#ddd]" />}
          </div>
        ))}
        <div className="ml-[426px] w-[33px] h-[33px] shrink-0 rounded-[3px] bg-white/20">
          <svg width="33" height="33" viewBox="0 0 33 33">
            <path d="M6 7h21l-2 21q-8.500 3-17 0z" fill="#c9cccc" stroke="#8a8f91" />
            <ellipse cx="16.500" cy="7" rx="11" ry="3.200" fill="#a9aeb0" stroke="#edefef" strokeWidth="1.300" />
            <path d="M9 7l3-3 4 1 4-3 4 4-3 3H12z" fill="#e8edf0" />
            <path d="M10 12l1 15M16.500 12v16M23 12l-1 15M8 17h17M8 22h17" stroke="#f0f0f0" strokeDasharray="2 1" />
            <path d="M13 17l4-3 3 4-2 4h-4z" fill="none" stroke="#777d80" />
          </svg>
        </div>
      </div>
    </div>
  );
}

export default function App() {
  return (
    <div className="w-[1366px] h-[768px] overflow-hidden bg-[#f8f8f8] font-['Lato',sans-serif]">
      <TitleBar />
      <TabStrip />
      <Toolbar />
      <NavBar />
      <Page />
      <Dock />
    </div>
  );
}
